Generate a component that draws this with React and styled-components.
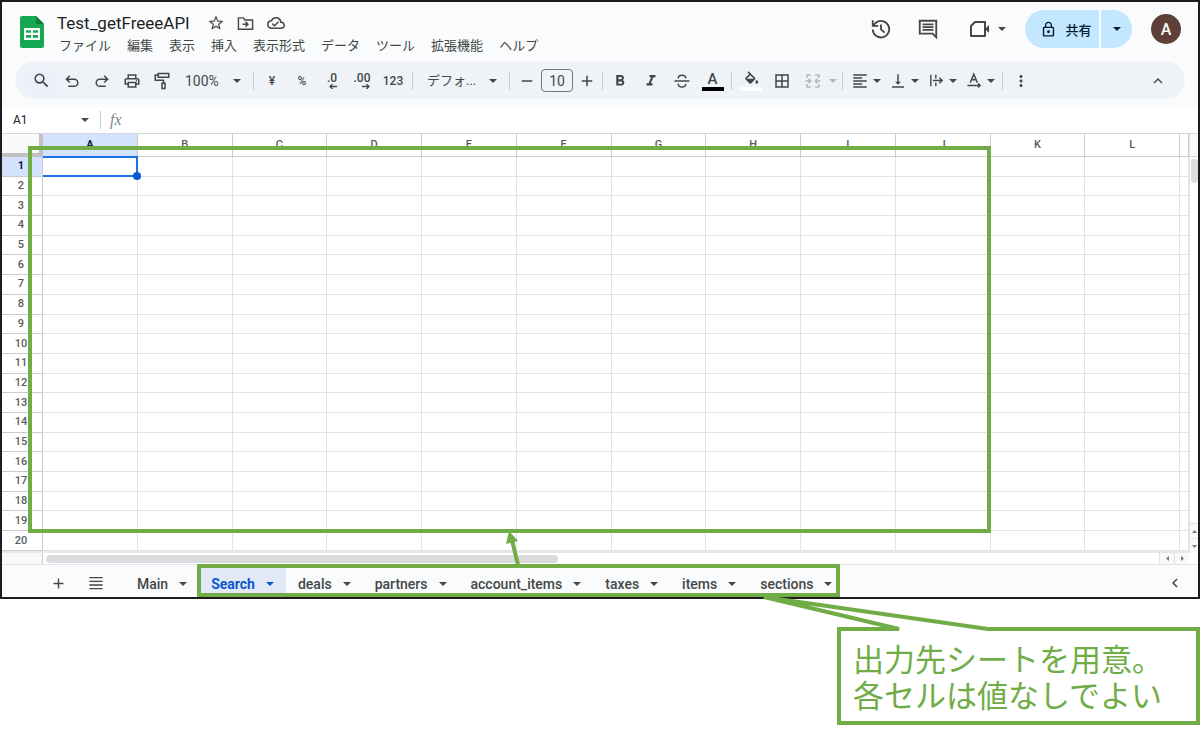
import React from 'react';
import styled, { createGlobalStyle } from 'styled-components';
import {
  MdAdd,
  MdBorderAll,
  MdChevronLeft,
  MdFormatAlignLeft,
  MdFormatBold,
  MdFormatItalic,
  MdKeyboardArrowUp,
  MdLockOutline,
  MdMoreVert,
  MdOutlineCloudDone,
  MdOutlinePrint,
  MdRemove,
  MdSearch,
  MdStarBorder,
  MdVerticalAlignBottom,
} from 'react-icons/md';

const GREEN = '#70ad47';
const UI_FONT = `Roboto, "Noto Sans CJK JP", sans-serif`;

const GlobalStyle = createGlobalStyle`
  * {
    box-sizing: border-box;
  }

  body {
    margin: 0;
    background: #fff;
    color: #444746;
    font-family: ${UI_FONT};
    font-size: 13px;
  }

  button,
  input,
  select {
    margin: 0;
    padding: 0;
    border: 0;
    background: none;
    color: inherit;
    font: inherit;
  }
`;

const Page = styled.div`
  position: relative;
  min-height: 100vh;
`;

const Window = styled.div`
  border: 2px solid #1c1c1c;
  background: #f9fbfd;
`;

/* ---------- header ---------- */

const Header = styled.header`
  display: flex;
  align-items: flex-start;
  height: 60px;
  padding: 8px 17px 0 18px;
`;

const Logo = styled.svg`
  width: 24px;
  height: 32px;
  margin-top: 6px;
`;

const TitleBlock = styled.div`
  flex: 1;
  margin: 1px 0 0 13px;
`;

const TitleRow = styled.div`
  display: flex;
  align-items: center;
  height: 24px;
  gap: 10px;
`;

const Title = styled.h1`
  margin: 0 6px 0 0;
  color: #1f1f1f;
  font-size: 17px;
  line-height: 24px;
  font-weight: 400;
`;

const PlainButton = styled.button`
  display: flex;
  align-items: center;
  justify-content: center;
  width: ${({ $width }) => $width || 20}px;
  height: 24px;
  font-size: ${({ $icon }) => $icon || 20}px;
  cursor: pointer;
`;

const MenuBar = styled.nav`
  display: flex;
  gap: 16px;
  padding-left: 2px;
`;

const MenuItem = styled.button`
  height: 22px;
  font-size: 13px;
  line-height: 22px;
  cursor: pointer;
`;

const Actions = styled.div`
  display: flex;
  align-items: center;
  height: 38px;
  gap: 19px;
`;

const ActionIcons = styled.div`
  display: flex;
  gap: 23px;
  margin-right: 9px;
`;

const ShareGroup = styled.div`
  display: flex;
  gap: 2px;
  height: 38px;
`;

const ShareButton = styled.button`
  display: flex;
  align-items: center;
  justify-content: center;
  gap: 8px;
  width: ${({ $small }) => ($small ? 31 : 74)}px;
  padding-left: ${({ $small }) => ($small ? 0 : 8)}px;
  border-radius: ${({ $small }) => ($small ? '0 19px 19px 0' : '19px 0 0 19px')};
  background: #c2e7ff;
  color: #001d35;
  font-size: 13px;
  font-weight: 500;
  cursor: pointer;
`;

const Avatar = styled.button`
  width: 30px;
  height: 30px;
  border-radius: 50%;
  background: #5d4037;
  color: #fff;
  font-size: 16px;
  font-weight: 500;
`;

/* ---------- toolbar ---------- */

const Toolbar = styled.div`
  display: flex;
  align-items: center;
  height: 37px;
  margin: 0 13px 8px;
  padding: 0 12px 0 10px;
  border-radius: 19px;
  background: #eff3f8;
`;

const Tool = styled.button`
  display: flex;
  align-items: center;
  justify-content: center;
  flex: none;
  gap: 4px;
  width: ${({ $width }) => $width || 30}px;
  height: 26px;
  background: ${({ $lit }) => ($lit ? '#edf0fa' : 'transparent')};
  color: ${({ $muted }) => ($muted ? '#b4b7ba' : 'inherit')};
  font-size: ${({ $size }) => $size || 18}px;
  font-weight: 500;
  cursor: pointer;
`;

const Divider = styled.span`
  flex: none;
  width: 1px;
  height: 18px;
  margin: 0 ${({ $gap }) => $gap || 3}px;
  background: #c7cbd0;
`;

const Drop = styled.label`
  display: flex;
  align-items: center;
  flex: none;
  width: ${({ $width }) => $width}px;
  padding: 0 9px 0 ${({ $inset }) => $inset}px;
`;

const DropSelect = styled.select`
  flex: 1;
  min-width: 0;
  appearance: none;
  outline: none;
  font-size: ${({ $size }) => $size}px;
  line-height: 20px;
`;

const SizeInput = styled.input`
  flex: none;
  width: 32px;
  height: 23px;
  border: 1px solid #747775;
  border-radius: 4px;
  font-size: 14px;
  text-align: center;
`;

const Decimal = styled.span`
  display: flex;
  flex-direction: column;
  align-items: flex-end;
  line-height: 12px;
`;

const ColorStack = styled.span`
  display: flex;
  flex-direction: column;
  align-items: center;
  width: 22px;
  border-bottom: 4px solid ${({ $color }) => $color};
  font-size: 15px;
  line-height: 16px;
`;

const Spacer = styled.span`
  flex: 1;
`;

/* ---------- formula bar ---------- */

const FormulaBar = styled.div`
  display: flex;
  align-items: center;
  height: 27px;
  border-bottom: 1px solid #d5d7da;
  background: #fff;
`;

const NameBox = styled.input`
  width: 61px;
  margin-left: 11px;
  font-size: 12px;
  color: #202124;
`;

const Fx = styled.span`
  margin-left: 5px;
  color: #80868b;
  font-family: "Liberation Serif", serif;
  font-size: 16px;
  font-style: italic;
`;

const FormulaInput = styled.input`
  flex: 1;
  outline: none;
`;

/* ---------- grid ---------- */

const GridArea = styled.div`
  display: flex;
  background: #fff;
`;

const Sheet = styled.table`
  width: 100%;
  height: 419px;
  border-collapse: separate;
  border-spacing: 0;
  table-layout: fixed;
  border-bottom: 2px solid #e8e8e8;
`;

const Corner = styled.td`
  width: 41px;
  height: 23px;
  padding: 0;
  border-right: 4px solid #bfc1c3;
  border-bottom: 4px solid #bfc1c3;
  background: #f8f9fa;
`;

const ColumnHead = styled.th`
  width: ${({ $width }) => ($width ? `${$width}px` : 'auto')};
  height: 23px;
  padding: 0;
  border-right: 1px solid #c9cbcd;
  border-bottom: 1px solid #c9cbcd;
  background: ${({ $active }) => ($active ? '#d3e3fd' : '#fff')};
  color: ${({ $active }) => ($active ? '#041e49' : '#575b5f')};
  font-size: 11px;
  line-height: 12px;
  font-weight: ${({ $active }) => ($active ? 700 : 500)};
`;

const RowHead = styled.th`
  padding: 0;
  border-right: 1px solid #c9cbcd;
  border-bottom: 1px solid #c9cbcd;
  background: ${({ $active }) => ($active ? '#d3e3fd' : '#fff')};
  color: ${({ $active }) => ($active ? '#041e49' : '#575b5f')};
  font-size: 11px;
  line-height: 12px;
  font-weight: ${({ $active }) => ($active ? 700 : 500)};
`;

const RowNumber = styled.span`
  display: block;
  width: 38px;
`;

const Cell = styled.td`
  position: relative;
  padding: 0;
  border-right: 1px solid #e2e3e3;
  border-bottom: 1px solid #e2e3e3;
`;

const Selection = styled.div`
  position: absolute;
  z-index: 1;
  inset: -1px -1px -1px 0;
  border: 2px solid #1a73e8;
  border-left: 0;

  &::after {
    content: '';
    position: absolute;
    right: -5px;
    bottom: -5px;
    width: 8px;
    height: 8px;
    border-radius: 50%;
    background: #0b57d0;
  }
`;

const VerticalBar = styled.div`
  display: flex;
  flex: none;
  flex-direction: column;
  width: 9px;
  border-left: 1px solid #e2e3e3;
`;

const VerticalHead = styled.div`
  height: 23px;
  border-bottom: 1px solid #d5d7da;
  background: #f8f9fa;
`;

const VerticalThumb = styled.div`
  height: 24px;
  margin: 2px 0 auto 1px;
  border-radius: 4px;
  background: #dadce0;
`;

const ScrollArrow = styled.button`
  display: flex;
  align-items: center;
  justify-content: center;
  width: ${({ $side }) => ($side ? 15 : 8)}px;
  height: ${({ $side }) => ($side ? 11 : 15)}px;
  border-top: ${({ $side }) => ($side ? 0 : 1)}px solid #e2e3e3;
  border-left: ${({ $side }) => ($side ? 1 : 0)}px solid #e2e3e3;
  background: #f8f9fa;
`;

const HorizontalBar = styled.div`
  display: flex;
  align-items: center;
  height: 12px;
  padding-right: 9px;
  border-bottom: 1px solid #e1e3e6;
  background: #fff;
`;

const BarCorner = styled.div`
  width: 41px;
  height: 11px;
  border-right: 1px solid #c9cbcd;
  background: #f8f9fa;
`;

const HorizontalTrack = styled.div`
  flex: 1;
  padding-left: 3px;
`;

const HorizontalThumb = styled.div`
  width: 46%;
  height: 8px;
  border-radius: 4px;
  background: #dadce0;
`;

/* ---------- sheet tabs ---------- */

const TabBar = styled.div`
  display: flex;
  align-items: stretch;
  height: 32px;
  padding-left: 41px;
`;

const TabTool = styled.button`
  display: flex;
  align-items: center;
  justify-content: center;
  width: 30px;
  margin-right: 8px;
  padding-top: 4px;
  font-size: 17px;
`;

const TabList = styled.div`
  display: flex;
  flex: 1;
  margin-left: 6px;
`;

const Tab = styled.button`
  display: flex;
  align-items: center;
  gap: 11px;
  padding: 5px 12px 0;
  background: ${({ $active }) => ($active ? '#e1e9f7' : 'transparent')};
  color: ${({ $active }) => ($active ? '#0b57d0' : '#444746')};
  font-size: 14px;
  line-height: 20px;
  font-weight: ${({ $active }) => ($active ? 700 : 500)};
  cursor: pointer;
`;

/* ---------- annotations ---------- */

const Marker = styled.div`
  position: absolute;
  top: ${({ $top }) => $top}px;
  left: ${({ $left }) => $left}px;
  width: ${({ $width }) => $width}px;
  height: ${({ $height }) => $height}px;
  border: 4px solid ${GREEN};
  pointer-events: none;
`;

const MarkerArrow = styled.svg`
  position: absolute;
  top: 530px;
  left: 500px;
  pointer-events: none;
`;

const Callout = styled.aside`
  position: relative;
  width: 363px;
  margin: 28px 0 0 auto;
  padding: 9px 12px;
  border: 4px solid ${GREEN};
  color: ${GREEN};
  font-family: "Noto Sans CJK JP", sans-serif;
  font-size: 31px;
  line-height: 36px;
  white-space: nowrap;
`;

const CalloutLine = styled.p`
  margin: 0;
`;

const CalloutTail = styled.svg`
  position: absolute;
  top: -36px;
  left: -91px;
  pointer-events: none;
`;

const Caret = ({ size = 8 }) => (
  <svg width={size} height={size / 2} viewBox="0 0 8 4" fill="currentColor" aria-hidden="true">
    <path d="M0 0h8L4 4z" />
  </svg>
);

const Glyph = ({ size = 18, children }) => (
  <svg
    width={size}
    height={size}
    viewBox="0 0 24 24"
    fill="none"
    stroke="currentColor"
    strokeWidth="2"
    aria-hidden="true"
  >
    {children}
  </svg>
);

const DecimalArrow = ({ d }) => (
  <svg width="8" height="5" viewBox="0 0 8 5" fill="none" stroke="currentColor" strokeWidth="1.3">
    <path d={d} />
  </svg>
);

const SheetsLogo = () => (
  <Logo viewBox="0 0 24 32" aria-label="Sheets">
    <path d="M2 0h14l8 8v22a2 2 0 0 1-2 2H2a2 2 0 0 1-2-2V2a2 2 0 0 1 2-2z" fill="#16a850" />
    <path d="M16 0l8 8h-8z" fill="#0c8038" />
    <path
      d="M4 12h16v12H4zM6 14.2v2.6h5v-2.6zM13 14.2v2.6h5v-2.6zM6 19v2.8h5V19zM13 19v2.8h5V19z"
      fill="#fff"
      fillRule="evenodd"
    />
  </Logo>
);

const menus = ['ファイル', '編集', '表示', '挿入', '表示形式', 'データ', 'ツール', '拡張機能', 'ヘルプ'];
const columns = ['A', 'B', 'C', 'D', 'E', 'F', 'G', 'H', 'I', 'J', 'K', 'L'];
const rows = Array.from({ length: 20 }, (_, i) => i + 1);
const tabs = ['Main', 'Search', 'deals', 'partners', 'account_items', 'taxes', 'items', 'sections'];

function SheetHeader() {
  return (
    <Header>
      <SheetsLogo />
      <TitleBlock>
        <TitleRow>
          <Title>Test_getFreeeAPI</Title>
          <PlainButton aria-label="スター" $icon={18}><MdStarBorder /></PlainButton>
          <PlainButton aria-label="移動">
            <Glyph size={17}>
              <path d="M2 4h7l2 3h11v13H2zM8 13h7M12 9.500l3.500 3.500-3.500 3.500" />
            </Glyph>
          </PlainButton>
          <PlainButton aria-label="保存済み" $icon={18}><MdOutlineCloudDone /></PlainButton>
        </TitleRow>
        <MenuBar>
          {menus.map((name) => (
            <MenuItem key={name}>{name}</MenuItem>
          ))}
        </MenuBar>
      </TitleBlock>
      <Actions>
        <ActionIcons>
          <PlainButton aria-label="履歴" $width={24}>
            <Glyph size={22}>
              <path d="M3 12.500a9 9 0 1 0 3-7L3.500 8M3 2.500v6h6M12 7v5.500l4 3.500" />
            </Glyph>
          </PlainButton>
          <PlainButton aria-label="コメント" $width={24}>
            <Glyph size={22}>
              <path d="M3 3h18v18l-4-4H3zM6 7h12M6 10h12M6 13h12" />
            </Glyph>
          </PlainButton>
        </ActionIcons>
        <PlainButton aria-label="通話" $width={38}>
          <Glyph size={24}>
            <path d="M7 5h10v14H3V9z" strokeLinejoin="round" />
            <path d="M17 12l4-4v8z" fill="currentColor" stroke="none" />
          </Glyph>
          <Spacer />
          <Caret />
        </PlainButton>
        <ShareGroup>
          <ShareButton>
            <MdLockOutline size={17} />
            共有
          </ShareButton>
          <ShareButton $small aria-label="共有オプション"><Caret /></ShareButton>
        </ShareGroup>
        <Avatar>A</Avatar>
      </Actions>
    </Header>
  );
}

function SheetToolbar() {
  return (
    <Toolbar>
      <Tool aria-label="検索" $width={32} $lit><MdSearch size={19} /></Tool>
      <Tool aria-label="元に戻す">
        <Glyph><path d="M9 5L4.500 9.500 9 14M5 9.500h10a4.700 4.700 0 0 1 0 9.500H7" /></Glyph>
      </Tool>
      <Tool aria-label="やり直し">
        <Glyph><path d="M15 5l4.500 4.500L15 14M19 9.500H9A4.700 4.700 0 0 0 9 19h8" /></Glyph>
      </Tool>
      <Tool aria-label="印刷"><MdOutlinePrint /></Tool>
      <Tool aria-label="書式を貼り付け">
        <Glyph><path d="M7 2h14v5H7zM7 4H3v7h11v4M12 15h4v7h-4z" /></Glyph>
      </Tool>
      <Drop $width={73} $inset={8}>
        <DropSelect aria-label="ズーム" $size={14}><option>100%</option></DropSelect>
        <Caret />
      </Drop>
      <Divider />
      <Tool $size={12}>¥</Tool>
      <Tool $size={12}>%</Tool>
      <Tool aria-label="小数点以下の桁数を減らす" $size={12}>
        <Decimal>.0<DecimalArrow d="M8 2.500H1M3.500 0L1 2.500 3.500 5" /></Decimal>
      </Tool>
      <Tool aria-label="小数点以下の桁数を増やす" $size={12}>
        <Decimal>.00<DecimalArrow d="M0 2.500h7M4.500 0L7 2.500 4.500 5" /></Decimal>
      </Tool>
      <Tool $size={12} $width={32}>123</Tool>
      <Divider />
      <Drop $width={90} $inset={11}>
        <DropSelect aria-label="フォント" $size={13}><option>デフォ...</option></DropSelect>
        <Caret />
      </Drop>
      <Divider />
      <Tool aria-label="縮小" $width={28}><MdRemove /></Tool>
      <SizeInput aria-label="フォントサイズ" defaultValue="10" />
      <Tool aria-label="拡大" $width={28}><MdAdd /></Tool>
      <Divider $gap={1} />
      <Tool aria-label="太字" $width={31}><MdFormatBold /></Tool>
      <Tool aria-label="斜体" $width={31}><MdFormatItalic /></Tool>
      <Tool aria-label="取り消し線" $width={31}>
        <Glyph><path d="M2 12h20M7 8.500C7 3 17 3 17 8.500M7 15.500c0 6 10 6 10 0" /></Glyph>
      </Tool>
      <Tool aria-label="テキストの色" $width={31}><ColorStack $color="#000">A</ColorStack></Tool>
      <Divider />
      <Tool aria-label="塗りつぶしの色" $width={31}>
        <ColorStack $color="#fff">
          <svg width="16" height="16" viewBox="0 0 22 21" fill="currentColor" aria-hidden="true">
            <path d="M16.560 8.940L7.620 0 6.210 1.410l2.380 2.380-5.150 5.150c-.59.59-.59 1.540 0 2.120l5.500 5.500c.29.29.68.44 1.060.44s.77-.15 1.060-.44l5.500-5.500c.59-.58.59-1.530 0-2.120zM5.210 10L10 5.210 14.790 10zM19 11.500s-2 2.170-2 3.500a2 2 0 0 0 4 0c0-1.330-2-3.500-2-3.500z" />
          </svg>
        </ColorStack>
      </Tool>
      <Tool aria-label="枠線" $width={31}><MdBorderAll /></Tool>
      <Tool aria-label="セルを結合" $width={31} $muted>
        <Glyph><path d="M9 4H4v4M15 4h5v4M9 20H4v-4M15 20h5v-4M2 12h7M22 12h-7M6 9l3 3-3 3M18 9l-3 3 3 3" /></Glyph>
      </Tool>
      <Tool $width={10} $muted aria-label="結合の種類"><Caret /></Tool>
      <Divider $gap={4} />
      <Tool aria-label="水平方向の配置" $width={38}><MdFormatAlignLeft /><Caret /></Tool>
      <Tool aria-label="垂直方向の配置" $width={38}><MdVerticalAlignBottom /><Caret /></Tool>
      <Tool aria-label="折り返し" $width={38}>
        <Glyph size={17}><path d="M4 4v16M11 4v5M11 15v5M7 12h13M16 8l4 4-4 4" /></Glyph>
        <Caret />
      </Tool>
      <Tool aria-label="回転" $width={38}>
        <Glyph size={17}><path d="M6 15l5-12 5 12M8 11h6M2 19h18M17 16l3 3-3 3" /></Glyph>
        <Caret />
      </Tool>
      <Divider />
      <Tool aria-label="その他"><MdMoreVert /></Tool>
      <Spacer />
      <Tool aria-label="メニューを非表示"><MdKeyboardArrowUp /></Tool>
    </Toolbar>
  );
}

function SheetGrid() {
  return (
    <GridArea>
      <Sheet>
        <thead>
          <tr>
            <Corner />
            {columns.map((name, i) => (
              <ColumnHead key={name} scope="col" $active={i === 0}>{name}</ColumnHead>
            ))}
            <ColumnHead $width={9} />
          </tr>
        </thead>
        <tbody>
          {rows.map((row) => (
            <tr key={row}>
              <RowHead scope="row" $active={row === 1}><RowNumber>{row}</RowNumber></RowHead>
              {columns.map((name) => (
                <Cell key={name}>{row === 1 && name === 'A' && <Selection />}</Cell>
              ))}
              <Cell />
            </tr>
          ))}
        </tbody>
      </Sheet>
      <VerticalBar>
        <VerticalHead />
        <VerticalThumb />
        <ScrollArrow aria-label="上"><svg width="5" height="3"><path d="M0 3h5L2.500 0z" fill="#777" /></svg></ScrollArrow>
        <ScrollArrow aria-label="下"><svg width="5" height="3"><path d="M0 0h5L2.500 3z" fill="#777" /></svg></ScrollArrow>
      </VerticalBar>
    </GridArea>
  );
}

function App() {
  return (
    <Page>
      <GlobalStyle />
      <Window>
        <SheetHeader />
        <SheetToolbar />
        <FormulaBar>
          <NameBox aria-label="名前ボックス" defaultValue="A1" />
          <PlainButton aria-label="名前付き範囲" $width={22}><Caret /></PlainButton>
          <Divider $gap={4} />
          <Fx>fx</Fx>
          <FormulaInput aria-label="数式" />
        </FormulaBar>
        <SheetGrid />
        <HorizontalBar>
          <BarCorner />
          <HorizontalTrack><HorizontalThumb /></HorizontalTrack>
          <ScrollArrow $side aria-label="左"><svg width="3" height="5"><path d="M3 0v5L0 2.500z" fill="#777" /></svg></ScrollArrow>
          <ScrollArrow $side aria-label="右"><svg width="3" height="5"><path d="M0 0v5l3-2.500z" fill="#777" /></svg></ScrollArrow>
        </HorizontalBar>
        <TabBar>
          <TabTool aria-label="シートを追加"><MdAdd /></TabTool>
          <TabTool aria-label="すべてのシート">
            <Glyph size={16}><path d="M2 4h20M2 9.500h20M2 15h20M2 20.500h20" /></Glyph>
          </TabTool>
          <TabList>
            {tabs.map((name) => (
              <Tab key={name} $active={name === 'Search'}>{name}<Caret /></Tab>
            ))}
          </TabList>
          <TabTool aria-label="サイドパネルを表示"><MdChevronLeft size={18} /></TabTool>
        </TabBar>
      </Window>

      <Callout>
        <CalloutLine>出力先シートを用意。</CalloutLine>
        <CalloutLine>各セルは値なしでよい</CalloutLine>
        {/* the white bar opens the top edge where the tail joins it */}
        <CalloutTail width="260" height="40" viewBox="0 0 260 40" fill="none">
          <path d="M149 34h89" stroke="#fff" strokeWidth="5" />
          <path d="M100 34h49L14 2l224 32h20" stroke={GREEN} strokeWidth="4" strokeLinejoin="bevel" />
        </CalloutTail>
      </Callout>

      <Marker $top={146} $left={28} $width={963} $height={387} />
      <Marker $top={564} $left={197} $width={643} $height={33} />
      <MarkerArrow width="30" height="38" viewBox="0 0 30 38">
        <path d="M18 35L12 10" stroke={GREEN} strokeWidth="4" />
        <path d="M9 1L6 14l12-3z" fill={GREEN} />
      </MarkerArrow>
    </Page>
  );
}

export default App;
